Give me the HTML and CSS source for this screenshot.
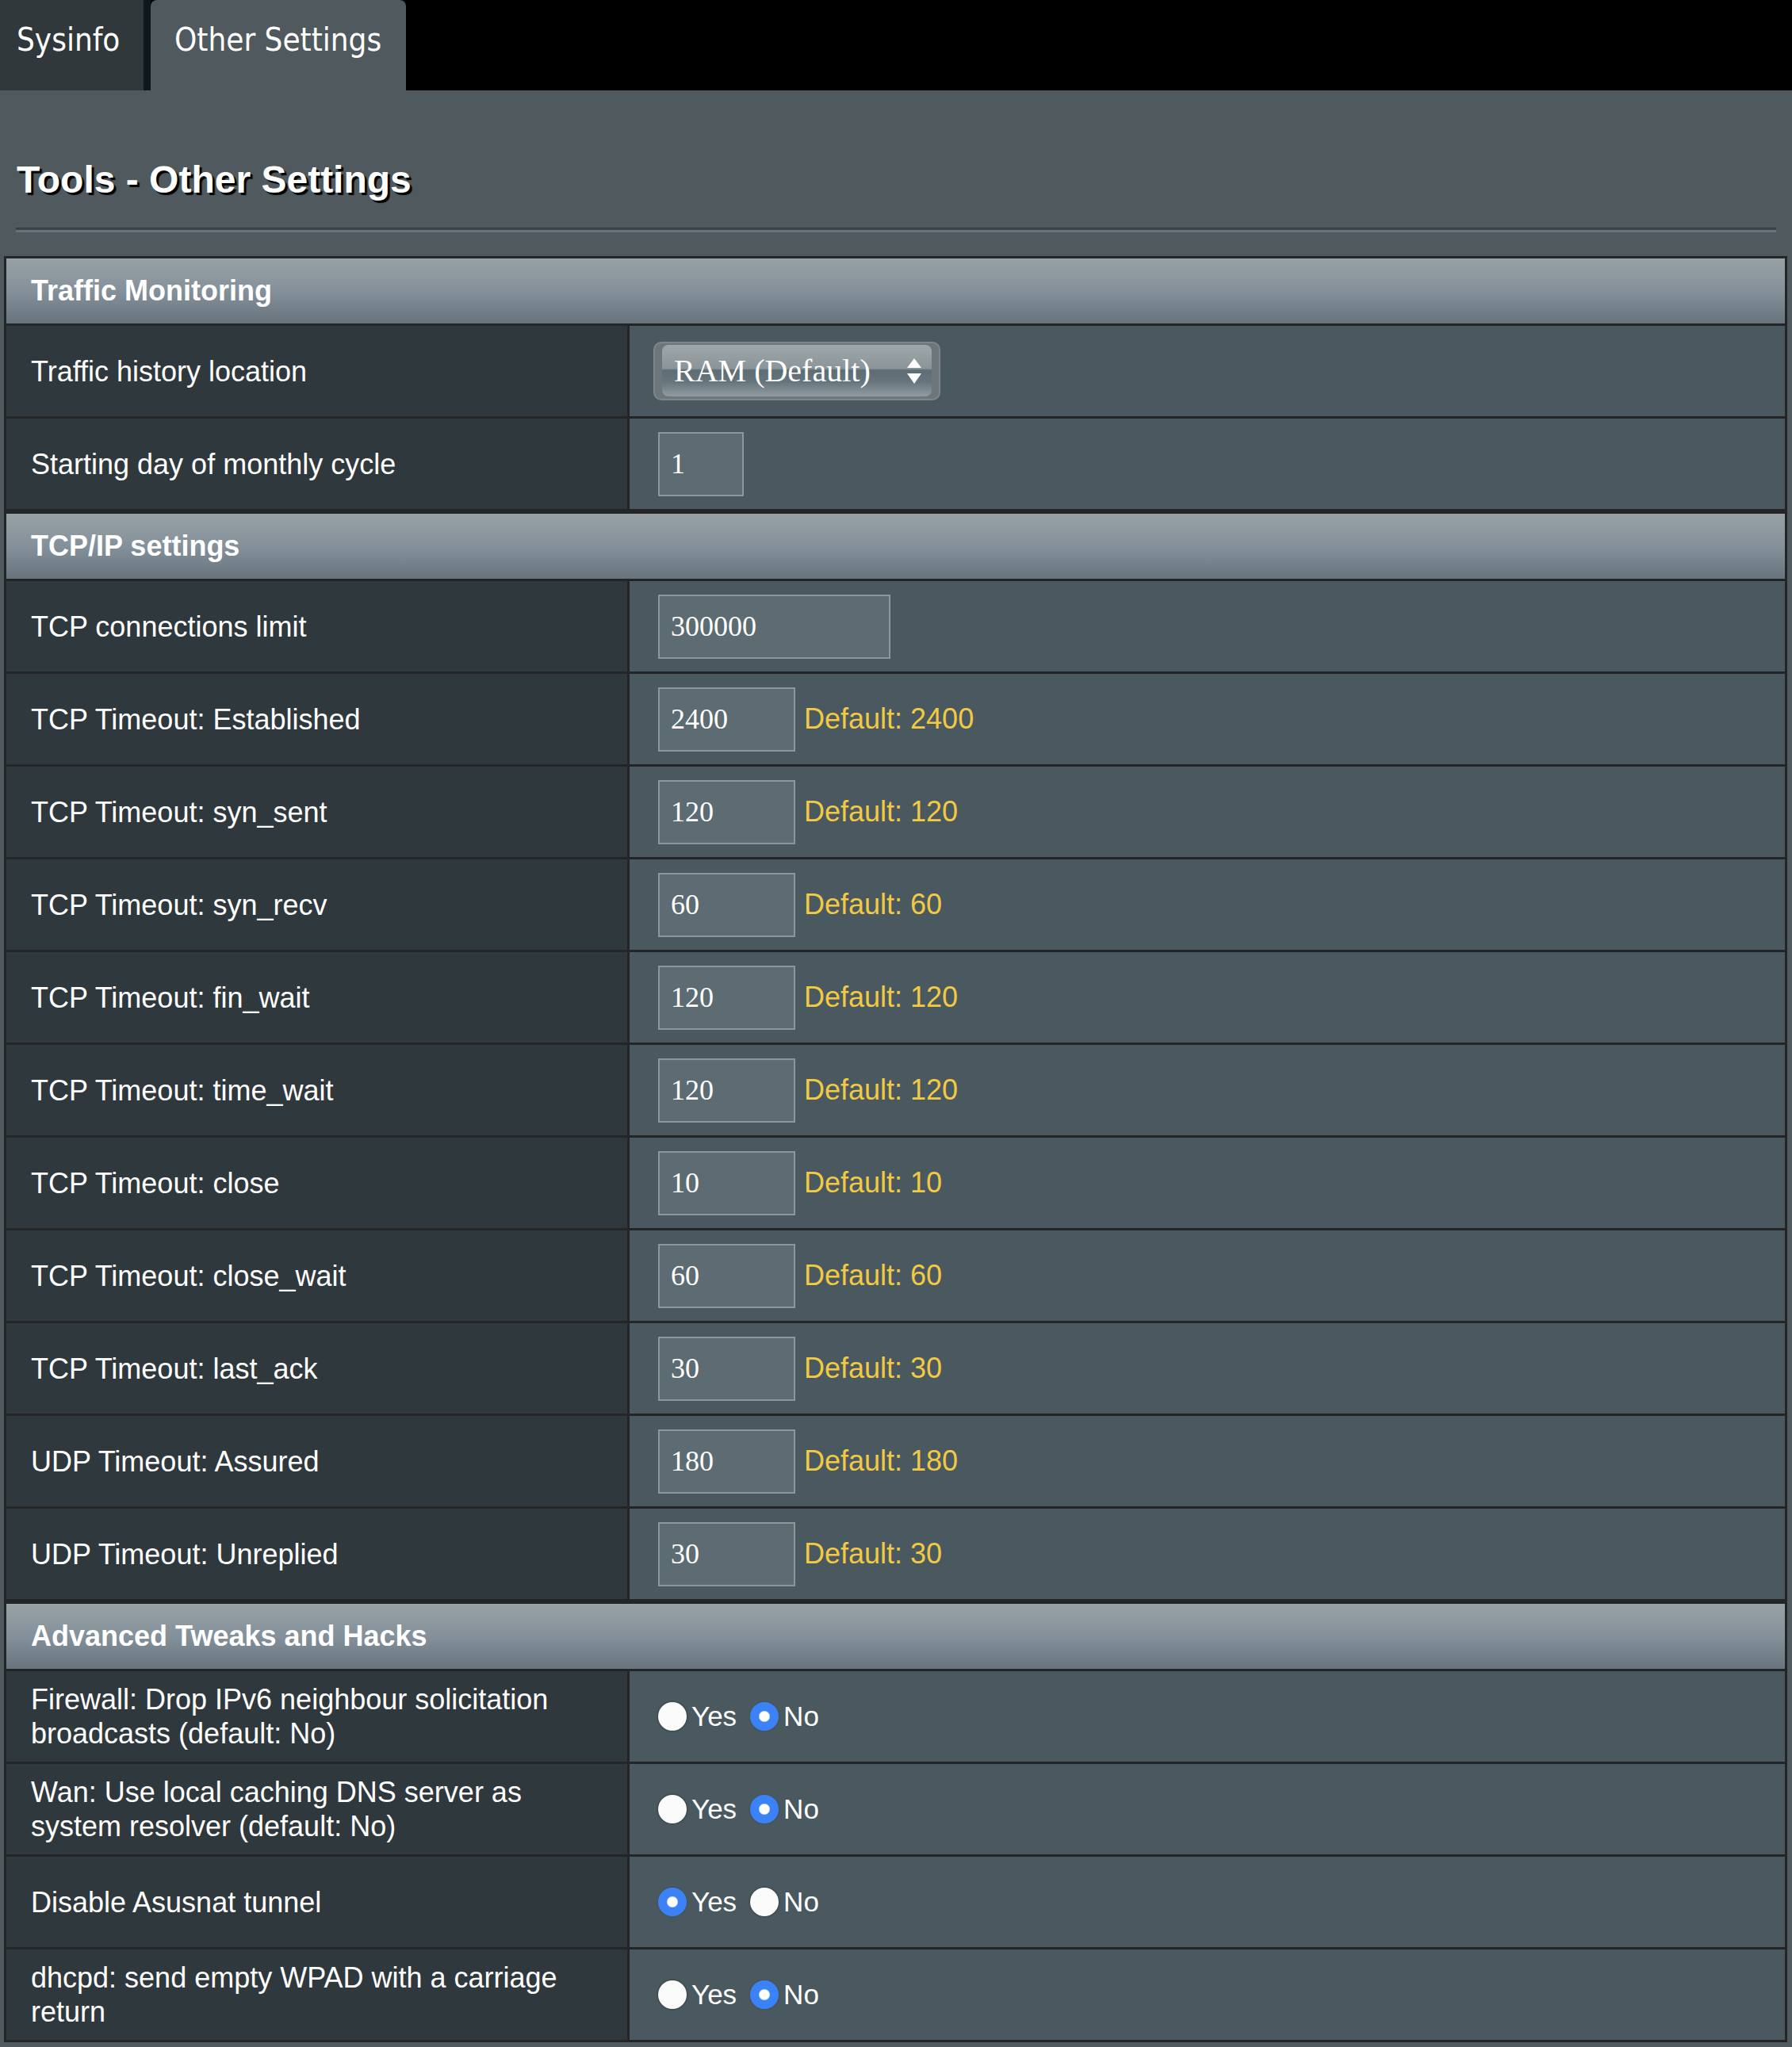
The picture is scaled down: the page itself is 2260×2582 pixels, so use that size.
FILE: index.html
```html
<!DOCTYPE html>
<html lang="en">
<head>
<meta charset="utf-8">
<title>Tools - Other Settings</title>
<link rel="stylesheet" href="styles.css">
</head>
<body>
<div class="tabbar">
  <div class="tab tab-off">Sysinfo</div>
  <div class="tab-gap"></div>
  <div class="tab tab-on">Other Settings</div>
</div>

<div class="page">
  <h1 class="title">Tools - Other Settings</h1>
  <div class="split"></div>

  <div class="section">
    <div class="section-head">Traffic Monitoring</div>
    <div class="row">
      <div class="label">Traffic history location</div>
      <div class="value">
        <div class="select">
          <div class="select-face">
            <span class="select-text">RAM (Default)</span>
            <svg class="select-arrows" width="18" height="32" viewBox="0 0 18 32"><path d="M9 0 L18 12 L0 12 Z" fill="#fff"/><path d="M0 19 L18 19 L9 32 Z" fill="#fff"/></svg>
          </div>
        </div>
      </div>
    </div>
    <div class="row">
      <div class="label">Starting day of monthly cycle</div>
      <div class="value"><input class="field field-xs" type="text" value="1"></div>
    </div>
  </div>

  <div class="section">
    <div class="section-head">TCP/IP settings</div>
    <div class="row">
      <div class="label">TCP connections limit</div>
      <div class="value"><input class="field field-lg" type="text" value="300000"></div>
    </div>
    <div class="row">
      <div class="label">TCP Timeout: Established</div>
      <div class="value"><input class="field" type="text" value="2400"><span class="hint">Default: 2400</span></div>
    </div>
    <div class="row">
      <div class="label">TCP Timeout: syn_sent</div>
      <div class="value"><input class="field" type="text" value="120"><span class="hint">Default: 120</span></div>
    </div>
    <div class="row">
      <div class="label">TCP Timeout: syn_recv</div>
      <div class="value"><input class="field" type="text" value="60"><span class="hint">Default: 60</span></div>
    </div>
    <div class="row">
      <div class="label">TCP Timeout: fin_wait</div>
      <div class="value"><input class="field" type="text" value="120"><span class="hint">Default: 120</span></div>
    </div>
    <div class="row">
      <div class="label">TCP Timeout: time_wait</div>
      <div class="value"><input class="field" type="text" value="120"><span class="hint">Default: 120</span></div>
    </div>
    <div class="row">
      <div class="label">TCP Timeout: close</div>
      <div class="value"><input class="field" type="text" value="10"><span class="hint">Default: 10</span></div>
    </div>
    <div class="row">
      <div class="label">TCP Timeout: close_wait</div>
      <div class="value"><input class="field" type="text" value="60"><span class="hint">Default: 60</span></div>
    </div>
    <div class="row">
      <div class="label">TCP Timeout: last_ack</div>
      <div class="value"><input class="field" type="text" value="30"><span class="hint">Default: 30</span></div>
    </div>
    <div class="row">
      <div class="label">UDP Timeout: Assured</div>
      <div class="value"><input class="field" type="text" value="180"><span class="hint">Default: 180</span></div>
    </div>
    <div class="row">
      <div class="label">UDP Timeout: Unreplied</div>
      <div class="value"><input class="field" type="text" value="30"><span class="hint">Default: 30</span></div>
    </div>
  </div>

  <div class="section">
    <div class="section-head">Advanced Tweaks and Hacks</div>
    <div class="row">
      <div class="label">Firewall: Drop IPv6 neighbour solicitation broadcasts (default: No)</div>
      <div class="value">
        <label class="opt"><input class="radio" type="radio" name="r1">Yes</label>
        <label class="opt"><input class="radio" type="radio" name="r1" checked>No</label>
      </div>
    </div>
    <div class="row">
      <div class="label">Wan: Use local caching DNS server as system resolver (default: No)</div>
      <div class="value">
        <label class="opt"><input class="radio" type="radio" name="r2">Yes</label>
        <label class="opt"><input class="radio" type="radio" name="r2" checked>No</label>
      </div>
    </div>
    <div class="row">
      <div class="label">Disable Asusnat tunnel</div>
      <div class="value">
        <label class="opt"><input class="radio" type="radio" name="r3" checked>Yes</label>
        <label class="opt"><input class="radio" type="radio" name="r3">No</label>
      </div>
    </div>
    <div class="row">
      <div class="label">dhcpd: send empty WPAD with a carriage return</div>
      <div class="value">
        <label class="opt"><input class="radio" type="radio" name="r4">Yes</label>
        <label class="opt"><input class="radio" type="radio" name="r4" checked>No</label>
      </div>
    </div>
  </div>
</div>
</body>
</html>
```

FILE: styles.css
```css
html, body {
  margin: 0;
  padding: 0;
}
body {
  background: #50595d;
  color: #fff;
  font-family: "Liberation Sans", Arial, sans-serif;
  min-height: 2582px;
}

/* ---------- tab bar ---------- */
.tabbar {
  display: flex;
  height: 114px;
  background: #000;
}
.tab {
  box-sizing: border-box;
  height: 114px;
  font-family: "DejaVu Sans Condensed", "DejaVu Sans", sans-serif;
  font-size: 40px;
  line-height: 1;
  padding-top: 30px;
  color: #fff;
}
.tab-off {
  width: 181px;
  padding-left: 21px;
  background: #30383b;
}
.tab-gap {
  width: 9px;
  background: #0e171b;
}
.tab-on {
  width: 322px;
  padding-left: 30px;
  background: #50595d;
  border-radius: 8px 8px 0 0;
}

/* ---------- page ---------- */
.page {
  padding: 86px 6px 6px 5px;
}
.title {
  margin: 0 0 0 16px;
  font-size: 48px;
  line-height: 53px;
  font-weight: bold;
  color: #fff;
  text-shadow: 3px 3px 1px #000;
}
.split {
  margin: 34px 14px 30px 15px;
  height: 0;
  border-top: 3px solid #394246;
  border-bottom: 3px solid #65737a;
}

/* ---------- sections ---------- */
.section {
  border: 3px solid #232526;
}
.section-head {
  box-sizing: border-box;
  height: 82px;
  display: flex;
  align-items: center;
  padding-left: 31px;
  font-size: 36px;
  font-weight: bold;
  background: linear-gradient(to bottom, #98a2a5 0%, #84909a 50%, #67747d 100%);
}
.row {
  box-sizing: border-box;
  display: flex;
  height: 117px;
  border-top: 3px solid #232526;
}
.label {
  box-sizing: border-box;
  width: 786px;
  flex: none;
  display: flex;
  align-items: center;
  padding: 0 30px 0 31px;
  background: #2f383c;
  border-right: 3px solid #232526;
  font-size: 36px;
  line-height: 43px;
}
.value {
  flex: 1;
  display: flex;
  align-items: center;
  padding-left: 36px;
  background: #4a595f;
  font-size: 36px;
}

/* ---------- text inputs ---------- */
.field {
  box-sizing: border-box;
  width: 173px;
  height: 81px;
  margin: 0;
  padding: 0 14px;
  border: 2px solid #8c979b;
  background: #5d6b72;
  color: #fff;
  font-family: "Liberation Serif", "Times New Roman", serif;
  font-size: 36px;
  outline: none;
}
.field-xs { width: 108px; }
.field-lg { width: 293px; }

.hint {
  margin-left: 11px;
  color: #f1c944;
  font-size: 36px;
}

/* ---------- select ---------- */
.select {
  box-sizing: border-box;
  width: 362px;
  height: 74px;
  margin-left: -6px;
  padding: 2px 9px 3px 9px;
  border: 2px solid #7f8689;
  border-radius: 10px;
  background: #6c777c;
}
.select-face {
  box-sizing: border-box;
  height: 100%;
  display: flex;
  align-items: center;
  justify-content: space-between;
  padding: 0 13px 0 15px;
  border-radius: 8px;
  background: linear-gradient(to bottom, #9ea7aa 0%, #8b9498 46%, #5e6d74 49%, #66757d 72%, #909ca1 100%);
}
.select-text {
  font-family: "Liberation Serif", "Times New Roman", serif;
  font-size: 40px;
  color: #fff;
}
.select-arrows {
  display: block;
}

/* ---------- radios ---------- */
.opt {
  display: flex;
  align-items: center;
  margin-right: 17px;
  font-size: 35px;
  color: #fff;
}
.radio {
  appearance: none;
  -webkit-appearance: none;
  width: 36px;
  height: 36px;
  margin: 0 6px 0 0;
  border-radius: 50%;
  background: #fbfbfb;
  box-shadow: 0 0 2px 1px rgba(40, 50, 55, 0.55);
}
.radio:checked {
  background: radial-gradient(circle, #ffffff 0 6px, #3b82f6 7.5px);
  box-shadow: 0 0 2px 0 rgba(40, 60, 90, 0.6);
}
```
